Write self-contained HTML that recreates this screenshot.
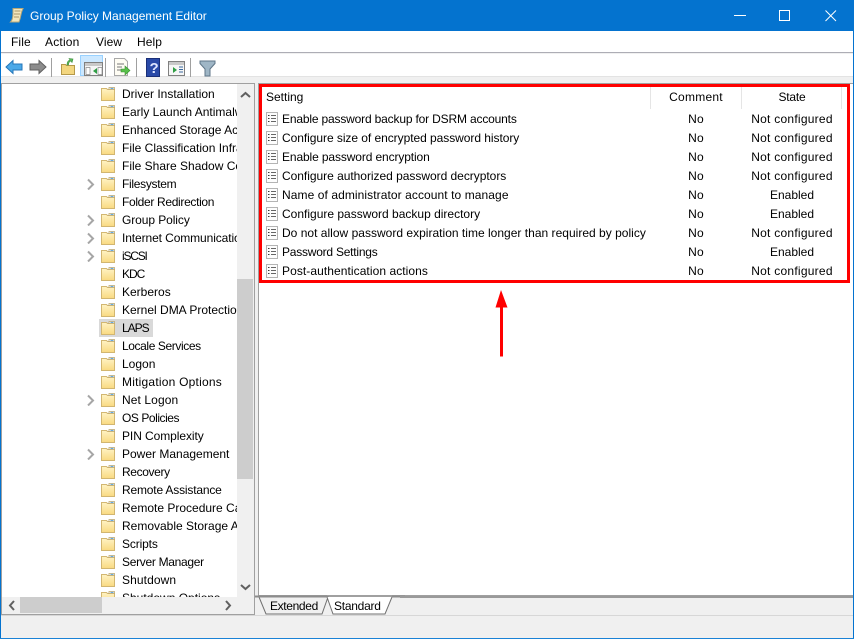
<!DOCTYPE html>
<html><head><meta charset="utf-8"><title>Group Policy Management Editor</title>
<style>
*{box-sizing:border-box}
html,body{margin:0;padding:0;width:854px;height:639px;overflow:hidden;background:#f0f0f0;font-family:"Liberation Sans",sans-serif;font-size:12px;color:#000}
.a{position:absolute}
.t{position:absolute;white-space:nowrap;line-height:18px;height:18px}
</style></head><body>
<svg width="0" height="0" style="position:absolute"><defs>
<linearGradient id="g" x1="0" y1="0" x2="0" y2="1"><stop offset="0" stop-color="#fff3c4"/><stop offset="1" stop-color="#f9d981"/></linearGradient>
<symbol id="f" viewBox="0 0 16 16"><path d="M1.500 14.500V2.500h5l1 1h7v11z" fill="url(#g)" stroke="#d2b670"/><path d="M9 1.500h5.500v2H9z" fill="#fff" stroke="#bfa76a" stroke-width=".8"/><path d="M10.500 2.400h3" stroke="#5aa0d8"/></symbol>
<symbol id="d" viewBox="0 0 16 16"><path d="M2.500 1.500h11v13h-11z" fill="#fdfdfd" stroke="#b4b4b4"/><path d="M7 4.500h5M7 7.500h5M7 10.500h5" stroke="#666"/><path d="M4 4.500h1.500M4 7.500h1.500M4 10.500h1.500" stroke="#3a3a3a"/></symbol>
</defs></svg>

<!-- title bar -->
<div class="a" style="left:0;top:0;width:854px;height:31px;background:#0473cf"></div>
<svg class="a" style="left:9px;top:7px" width="16" height="17" viewBox="0 0 16 17"><path d="M4 1.500h10c-1 2-1.500 3-2 6s-1 5-2 7.500H1.500c1-1 1.800-2 2.200-5S4 4 4 1.500z" fill="#f3e6bd" stroke="#b9a878"/><path d="M5.500 4h6M5 7h6M5 10h5" stroke="#a8956a"/></svg>
<div class="t" style="left:30px;top:7px;color:#fff;font-size:12px">Group Policy Management Editor</div>
<svg class="a" style="left:730px;top:8px" width="110" height="16" fill="none" stroke="#fff"><path d="M4 7.500h12"/><path d="M49.500 2.500h10v10h-10z"/><path d="M95.500 2.500l10.500 10.500M106 2.500L95.500 13"/></svg>

<!-- left/right/bottom window border -->
<div class="a" style="left:0;top:31px;width:1px;height:608px;background:#0473cf"></div>
<div class="a" style="left:853px;top:31px;width:1px;height:608px;background:#0473cf"></div>
<div class="a" style="left:0;top:638px;width:854px;height:1px;background:#1a82d6"></div>

<!-- menu -->
<div class="a" style="left:1px;top:31px;width:852px;height:22px;background:#fff;border-bottom:1px solid #adadb5"></div>
<div class="t" style="left:11px;top:33px;letter-spacing:.1px">File</div>
<div class="t" style="left:45px;top:33px;letter-spacing:.2px">Action</div>
<div class="t" style="left:96px;top:33px;letter-spacing:.1px">View</div>
<div class="t" style="left:137px;top:33px;letter-spacing:.1px">Help</div>

<!-- toolbar -->
<div class="a" style="left:1px;top:54px;width:852px;height:23px;background:#fff;border-bottom:1px solid #e3e3e3"></div>
<div class="a" style="left:80px;top:55px;width:23px;height:21px;background:#cce8ff;border:1px solid #99d1ff"></div>
<svg class="a" style="left:0;top:54px" width="230" height="24" viewBox="0 0 230 24">
<path d="M6 13l7-6.500v3.500h9v6h-9v3.500z" fill="#4aa8e8" stroke="#2476b8"/>
<path d="M46 13l-7-6.500v3.500h-9v6h9v3.500z" fill="#8c8c8c" stroke="#606060"/>
<path d="M51.500 4v19" stroke="#a0a0a0"/>
<path d="M61.500 20.500v-10h4l1 1h8v9z" fill="#f3d67f" stroke="#b5994a"/>
<path d="M67 11c0-3 1-4.500 3-5l-1-1.500 4 .5-1 3.500-1-1.500c-1.500.5-2.500 2-2.500 4z" fill="#5cb85c" stroke="#3b8e3b" stroke-width=".6"/>
<path d="M84.500 8.500h18v13h-18z" fill="#f6f6f6" stroke="#808080"/><path d="M85 9h17v3H85z" fill="#c9c9c9"/>
<path d="M86 13.500h4v7h-4zM98 13.500h4v7h-4z" fill="#fff" stroke="#8a8a8a" stroke-width=".7"/>
<path d="M97 14v6l-4-3z" fill="#2f9e44"/>
<path d="M105.500 4v19" stroke="#a0a0a0"/>
<path d="M114.500 4.500h10l3 3v14h-13z" fill="#fffdf4" stroke="#a8a8a8"/><path d="M117 10h7M117 13h5M117 16h6" stroke="#777"/>
<path d="M121 15h4v-3l5 4.500-5 4.500v-3h-4z" fill="#58c04a" stroke="#3a8f30" stroke-width=".6"/>
<path d="M136.500 4v19" stroke="#a0a0a0"/>
<rect x="146.500" y="4.500" width="13" height="18" fill="#2a4aa8" stroke="#1a2f78"/>
<text x="149.500" y="19" font-family="Liberation Sans" font-weight="bold" font-size="15" fill="#dfe6ff">?</text>
<path d="M168.500 7.500h16v14h-16z" fill="#f6f6f6" stroke="#808080"/><path d="M169 8h15v3h-15z" fill="#c9c9c9"/>
<path d="M173 13v6l4-3z" fill="#2f9e44"/><path d="M179 13h4M179 15.500h4M179 18h4" stroke="#3c6a9e"/>
<path d="M190.500 4v19" stroke="#a0a0a0"/>
<path d="M200 7h15v2.500l-5 5.500v7h-5v-7l-5-5.500z" fill="#9fb6c6" stroke="#5f7688"/>
</svg>

<!-- tree panel -->
<div class="a" style="left:1px;top:83px;width:254px;height:532px;background:#fff;border:1px solid #a0a0a0;border-bottom:2px solid #a0a0a0;overflow:hidden"></div>
<div class="a" style="left:2px;top:84px;width:252px;height:530px;overflow:hidden">
<div class="a" style="left:97px;top:235px;width:54px;height:18px;background:#d9d9d9"></div>
<div id="rows"></div>
<div class="a" style="left:235px;top:0;width:17px;height:513px;background:#f0f0f0"></div>
<div class="a" style="left:235px;top:195px;width:16px;height:200px;background:#cdcdcd"></div>
<svg class="a" style="left:235px;top:0" width="17" height="514" fill="none" stroke="#606060" stroke-width="2"><path d="M4 13l4.500-4 4.500 4M4 501l4.500 4 4.500-4"/></svg>
<div class="a" style="left:0;top:513px;width:252px;height:17px;background:#f0f0f0"></div>
<div class="a" style="left:18px;top:513px;width:82px;height:16px;background:#cdcdcd"></div>
<svg class="a" style="left:0;top:513px" width="252" height="17" fill="none" stroke="#606060" stroke-width="2"><path d="M12 4l-4 4.500 4 4.500M224 4l4 4.500-4 4.500"/></svg>
</div>

<!-- right panel -->
<div class="a" style="left:258px;top:83px;width:595px;height:514px;background:#fff;border:1px solid #a0a0a0;border-bottom:2px solid #a0a0a0;border-right:0"></div>
<div class="a" style="left:650px;top:87px;width:1px;height:22px;background:#e5e5e5"></div>
<div class="a" style="left:741px;top:87px;width:1px;height:22px;background:#e5e5e5"></div>
<div class="a" style="left:841px;top:87px;width:1px;height:22px;background:#e5e5e5"></div>
<div class="t" style="left:266px;top:88px">Setting</div>
<div class="t" style="left:651px;top:88px;width:90px;text-align:center;letter-spacing:.25px">Comment</div>
<div class="t" style="left:742px;top:88px;width:100px;text-align:center;letter-spacing:-.2px">State</div>
<div id="set"></div>

<!-- red highlight -->
<div class="a" style="left:259px;top:84px;width:591px;height:199px;border:3px solid #ff0000"></div>
<svg class="a" style="left:491px;top:288px" width="22" height="70"><path d="M10 2l-5.500 17.500h4.500v49h3v-49h4.500z" fill="#f00"/></svg>

<!-- tabs -->
<div class="a" style="left:255px;top:597px;width:598px;height:18px;background:#f0f0f0"></div>
<svg class="a" style="left:255px;top:595px" width="150" height="21">
<path d="M4 2l7 17h56l6-17z" fill="#f0f0f0" stroke="#707070"/>
<path d="M72 2l6 17h52l7-17" fill="#fff" stroke="#707070"/>
<path d="M0 1.500h72M137 1.500H150" stroke="#8c8c8c" stroke-width="2"/>
</svg>
<div class="a" style="left:400px;top:596px;width:453px;height:2px;background:#9a9a9a"></div>
<div class="t" style="left:270px;top:597px;letter-spacing:-.35px">Extended</div>
<div class="t" style="left:334px;top:597px;letter-spacing:-.25px">Standard</div>

<!-- status bar -->
<div class="a" style="left:1px;top:615px;width:852px;height:1px;background:#d7d7d7"></div>

<script>
var tree=[["Driver Installation",0,0],["Early Launch Antimalware",0,0],["Enhanced Storage Access",0,0],["File Classification Infrastructure",0,0],["File Share Shadow Copy",0,0],["Filesystem",1,-.3],["Folder Redirection",0,-.33],["Group Policy",1,-.08],["Internet Communication",1,-.1],["iSCSI",1,-1.2],["KDC",0,-1],["Kerberos",0,0],["Kernel DMA Protection",0,0],["LAPS",0,-1],["Locale Services",0,-.4],["Logon",0,0],["Mitigation Options",0,.22],["Net Logon",1,.1],["OS Policies",0,-.45],["PIN Complexity",0,-.07],["Power Management",1,0],["Recovery",0,-.37],["Remote Assistance",0,-.18],["Remote Procedure Call",0,0],["Removable Storage Access",0,0],["Scripts",0,-.14],["Server Manager",0,-.3],["Shutdown",0,.1],["Shutdown Options",0,0]];
var h='';
tree.forEach(function(r,i){var y=i*18+1;
 if(r[1])h+='<svg class="a" style="left:84px;top:'+(y+3)+'px" width="10" height="12" fill="none" stroke="#a6a6a6" stroke-width="2"><path d="M2 1.500L7 6.500 2 11.500"/></svg>';
 h+='<svg class="a" style="left:98px;top:'+(y+1)+'px" width="16" height="16"><use href="#f"/></svg>';
 h+='<div class="t" style="left:120px;top:'+y+'px;width:115px;overflow:hidden;letter-spacing:'+r[2]+'px">'+r[0]+'</div>';
});
document.getElementById('rows').innerHTML=h;
var s=[["Enable password backup for DSRM accounts","Not configured",-.17],["Configure size of encrypted password history","Not configured",-.05],["Enable password encryption","Not configured",-.12],["Configure authorized password decryptors","Not configured",-.03],["Name of administrator account to manage","Enabled",.08],["Configure password backup directory","Enabled",0],["Do not allow password expiration time longer than required by policy","Not configured",.015],["Password Settings","Enabled",-.23],["Post-authentication actions","Not configured",.07]];
h='';
s.forEach(function(r,i){var y=110+i*19;
 h+='<svg class="a" style="left:264px;top:'+(y+1)+'px" width="16" height="16"><use href="#d"/></svg>';
 h+='<div class="t" style="left:282px;top:'+y+'px;letter-spacing:'+r[2]+'px">'+r[0]+'</div>';
 h+='<div class="t" style="left:651px;top:'+y+'px;width:90px;text-align:center;letter-spacing:.25px">No</div>';
 h+='<div class="t" style="left:742px;top:'+y+'px;width:100px;text-align:center;letter-spacing:'+(r[1]=="Enabled"?0:.25)+'px">'+r[1]+'</div>';
});
document.getElementById('set').innerHTML=h;
</script>
</body></html>
